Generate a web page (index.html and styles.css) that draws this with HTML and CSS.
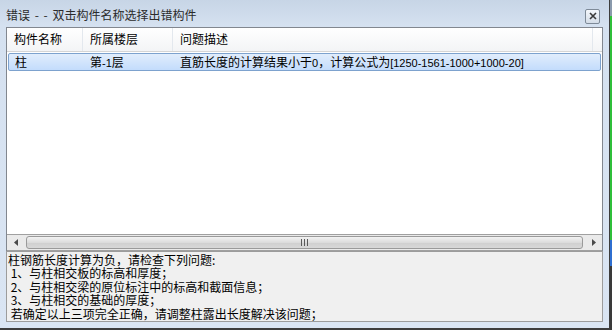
FILE: index.html
```html
<!DOCTYPE html>
<html lang="zh">
<head>
<meta charset="utf-8">
<title>错误</title>
<link rel="stylesheet" href="styles.css">
</head>
<body>
<div class="screen">
  <div class="window">
    <div class="titlebar">
      <span class="title">错误 - - 双击构件名称选择出错构件</span>
      <button class="close" aria-label="关闭">
        <svg width="8" height="8" viewBox="0 0 8 8"><path d="M1 1L7 7M7 1L1 7" stroke="#3a3a3a" stroke-width="1.6"/></svg>
      </button>
    </div>
    <div class="content">
      <div class="list">
        <div class="header">
          <div class="col c1">构件名称</div>
          <div class="col c2">所属楼层</div>
          <div class="col c3">问题描述</div>
          <div class="col c4"></div>
        </div>
        <div class="rows">
          <div class="row selected">
            <div class="cell c1">柱</div>
            <div class="cell c2">第<span class="num">-1</span>层</div>
            <div class="cell c3">直筋长度的计算结果小于<span class="num">0</span>，计算公式为<span class="num">[1250-1561-1000+1000-20]</span></div>
          </div>
        </div>
        <div class="hscroll">
          <div class="arrow left"><svg width="4" height="7" viewBox="0 0 4 7"><path d="M4 0L0 3.5L4 7Z" fill="#4a4a4a"/></svg></div>
          <div class="track">
            <div class="thumb"><span class="grip"></span></div>
          </div>
          <div class="arrow right"><svg width="4" height="7" viewBox="0 0 4 7"><path d="M0 0L4 3.5L0 7Z" fill="#4a4a4a"/></svg></div>
        </div>
      </div>
      <div class="msg">
        <div class="line">柱钢筋长度计算为负，请检查下列问题:</div>
        <div class="line"> 1、与柱相交板的标高和厚度；</div>
        <div class="line"> 2、与柱相交梁的原位标注中的标高和截面信息；</div>
        <div class="line"> 3、与柱相交的基础的厚度；</div>
        <div class="line"> 若确定以上三项完全正确，请调整柱露出长度解决该问题；</div>
      </div>
    </div>
  </div>
  <div class="edge">
    <div class="e1"></div><div class="e2"></div><div class="e3"></div><div class="e4"></div>
  </div>
</div>
</body>
</html>
```

FILE: styles.css
```css
* { box-sizing: border-box; }
html, body { margin: 0; padding: 0; }
body {
  width: 612px; height: 330px; overflow: hidden;
  font-family: "Noto Sans CJK SC", "Noto Sans", sans-serif;
  font-size: 12px; color: #000;
}
.screen { display: flex; width: 612px; height: 330px; }
.window {
  width: 610px; height: 330px;
  background: linear-gradient(#c7d5e6 0, #d5e1f0 26px, #dae5f3 100%);
  border-right: 1px solid #3d3d3d;
  border-bottom: 2px solid #3d3d3d;
  padding: 0 6px 6px 6px;
  display: flex; flex-direction: column;
}
.edge { width: 2px; display: flex; flex-direction: column; background: #2a2a2a; }
.edge .e1 { height: 16px; background: #8a9aac; }
.edge .e2 { height: 224px; background: #2fbf3a; }
.edge .e3 { height: 26px; background: #2f6fd0; }
.edge .e4 { flex: 1; background: #3a3a3a; }

.titlebar {
  height: 27px; display: flex; align-items: center; justify-content: space-between;
  padding-top: 2px;
}
.title { color: #2b2b2b; font-size: 12px; line-height: 14px; word-spacing: 2px; }
.close {
  width: 15px; height: 15px; margin-right: 3px; margin-top: 3px; padding: 0;
  border: 1px solid #7e8a98; border-radius: 2px;
  background: linear-gradient(#f4f7fb, #d4dde8);
  display: flex; align-items: center; justify-content: center;
}
.content { flex: 1; display: flex; flex-direction: column; }
.list {
  height: 224px; background: #fff;
  border: 1px solid #82878f; border-bottom: none;
  display: flex; flex-direction: column;
}
.header {
  height: 24px; display: flex;
  background: linear-gradient(#ffffff, #f3f4f6);
  border-bottom: 1px solid #d5d5d5;
}
.header .col {
  line-height: 22px; padding-left: 7px; border-right: 1px solid #e3e8ee; color: #000;
}
.c1 { width: 76px; }
.c2 { width: 90px; }
.c3 { width: 420px; }
.header .c4 { flex: 1; border-right: none; }
.rows { flex: 1; padding: 0 1px; }
.row { display: flex; height: 18px; margin-top: 1px; }
.row.selected {
  border: 1px solid #7da2ce; border-radius: 2px;
  background: linear-gradient(#e1edfc, #c3dcfc);
}
.row .cell { line-height: 16px; padding-left: 6px; white-space: nowrap; }
.row .c1 { width: 75px; }
.row .c3 { width: auto; }
.num { font-family: "Liberation Sans", "Noto Sans", sans-serif; font-size: 11px; }
.hscroll {
  height: 17px; display: flex; align-items: stretch;
  background: #eaeaea; border-top: 1px solid #a0a0a0;
  border-bottom: 1px solid #a0a0a0;
}
.arrow { width: 17px; display: flex; align-items: center; justify-content: center; }
.track { flex: 1; padding: 1px 2px 1px 2px; }
.thumb {
  height: 100%; border: 1px solid #9a9a9a; border-radius: 3px;
  background: linear-gradient(#f2f2f2, #dcdcdc 50%, #cfcfcf 51%, #d8d8d8);
  display: flex; align-items: center; justify-content: center;
}
.grip {
  width: 7px; height: 7px;
  background: repeating-linear-gradient(90deg, #5a5a5a 0 1px, transparent 1px 3px);
}
.msg {
  flex: 1; background: #f0f0f0; border: 1px solid #9c9c9c;
  padding: 1px 0 0 1px;
}
.line { height: 13.4px; line-height: 13.4px; white-space: pre; font-size: 12px; }
```
